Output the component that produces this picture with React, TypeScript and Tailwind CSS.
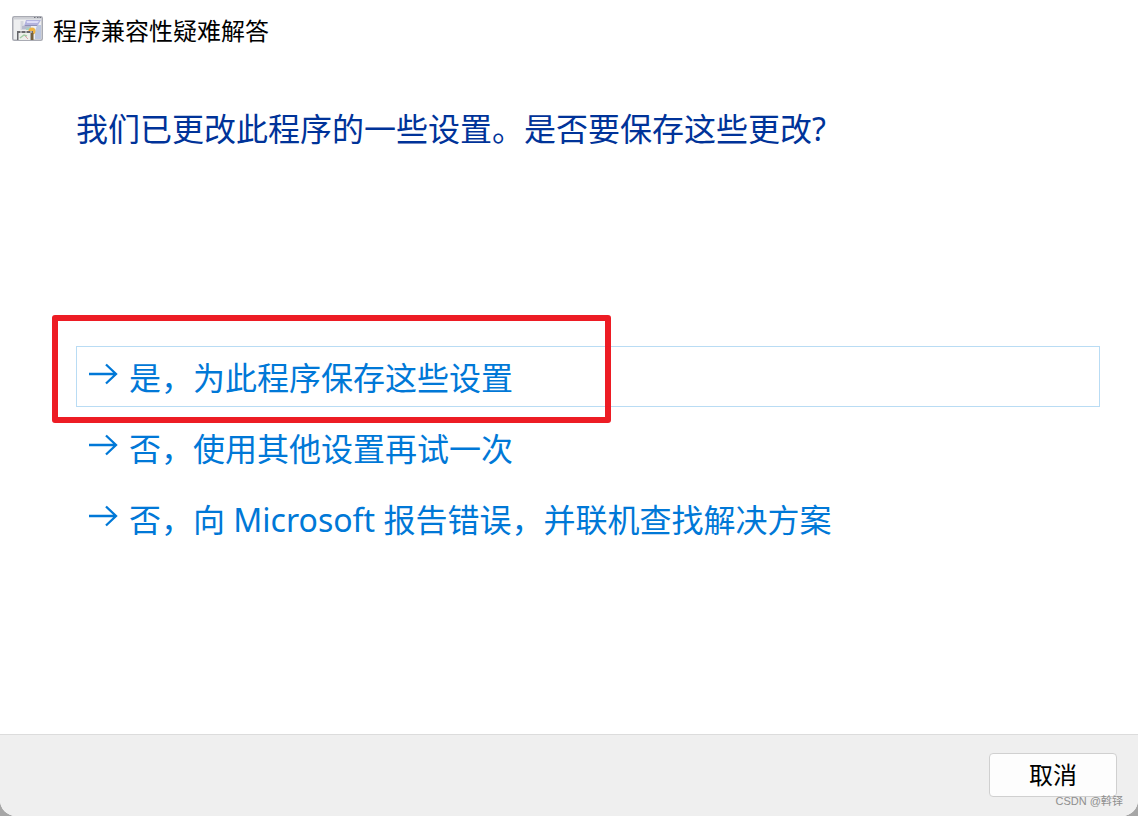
const FONT = "font-['Noto_Sans','Noto_Sans_CJK_SC',sans-serif]";

function AppIcon() {
  return (
    <svg className="mt-4" width="31" height="25" viewBox="0 0 31 25" aria-hidden="true">
      <rect x="0.75" y="0.75" width="29.5" height="23.5" rx="1.5" fill="#eeeff0" stroke="#a9abb3" strokeWidth="1.5" />
      <path d="M2 2h27v1.500H2z" fill="#cfd1d7" />
      <path d="M22 1h1.500v1H22zM25 1h1.500v1H25zM27.500 1H29v1h-1.500z" fill="#70737c" />
      <path d="M8.500 5h3v4h7v5H8.500z" fill="#d4d6dd" />
      <path d="M10 10h9v3h-9z" fill="#b7bace" />
      <path d="M25 9h4v14h-6v-7z" fill="#bcc6de" />
      <path d="M14 4h15l-3.500 6H12z" fill="#b3b3df" />
      <path d="M14.500 5H27l-1.500 2H15z" fill="#deddf7" />
      <path d="M13 9.500h12" stroke="#8f90b5" />
      <path d="M14 12l4-1 1 3h-5z" fill="#a8cfc5" />
      <circle cx="20" cy="15" r="3.500" fill="#eeb445" />
      <path d="M5 15h16v9H5z" fill="#a9a9ab" />
      <path d="M7 17h11v7H7z" fill="#ecefeb" />
      <path d="M5 16h16" stroke="#55565a" strokeWidth="1.500" strokeDasharray="3 2" />
      <path d="M5.500 16v8" stroke="#64666a" />
      <path d="M8 22l4-3 3 1" fill="none" stroke="#a3cca4" strokeWidth="1.500" />
      <path d="M13 20l3 3" stroke="#dda0aa" />
      <path d="M19 17h2.500v7H19z" fill="#74603c" />
    </svg>
  );
}

function ArrowIcon() {
  return (
    <svg className="mt-4 shrink-0" width="30" height="22" viewBox="0 0 30 22" fill="none" stroke="#0078d7" strokeWidth="2.3" aria-hidden="true">
      <path d="M0 11H27M17 1.500L27 11L17 20.500" />
    </svg>
  );
}

function Option({ text, selected = false }: { text: string; selected?: boolean }) {
  return (
    <button
      type="button"
      className={`flex h-[61px] w-full items-start gap-[10px] border pl-3 text-left text-[32px] leading-[62px] text-[#0078d7] ${selected ? "border-[#b9dcf4]" : "border-transparent"}`}
    >
      <ArrowIcon />
      <span>{text}</span>
    </button>
  );
}

export default function App() {
  return (
    <div className="min-h-screen bg-[#a6a6a6]">
      <div className={`flex min-h-screen flex-col overflow-hidden rounded-b-[16px] bg-white ${FONT}`}>
        <header className="flex h-15 items-start gap-[10px] pl-3">
          <AppIcon />
          <span className="text-2xl leading-[62px] text-black">程序兼容性疑难解答</span>
        </header>
        <main className="flex-1 pr-[38px] pl-[76px]">
          <h1 className="pt-11 text-[32px] leading-[50px] text-[#003399]">我们已更改此程序的一些设置。是否要保存这些更改?</h1>
          <div className="mt-48 flex flex-col gap-[10px]">
            <div className="relative">
              <Option text="是，为此程序保存这些设置" selected />
              <div className="pointer-events-none absolute -top-[31px] -left-6 h-[108px] w-[559px] rounded-[3px] border-[6px] border-[#ed1c24]" />
            </div>
            <Option text="否，使用其他设置再试一次" />
            <Option text="否，向 Microsoft 报告错误，并联机查找解决方案" />
          </div>
        </main>
        <footer className="relative flex h-[82px] items-start justify-end border-t border-[#dcdcdc] bg-[#efefef] pt-[18px] pr-[21px]">
          <button type="button" className="h-11 w-32 rounded-[4px] border border-[#d0d0d0] bg-[#fdfdfd] text-2xl leading-[42px] text-black">
            取消
          </button>
          <span className="absolute right-[15px] bottom-[5px] font-['Liberation_Sans','Noto_Sans_CJK_SC',sans-serif] text-[11px] leading-5 text-[#8e8e8e]">
            CSDN @斡铎
          </span>
        </footer>
      </div>
    </div>
  );
}
